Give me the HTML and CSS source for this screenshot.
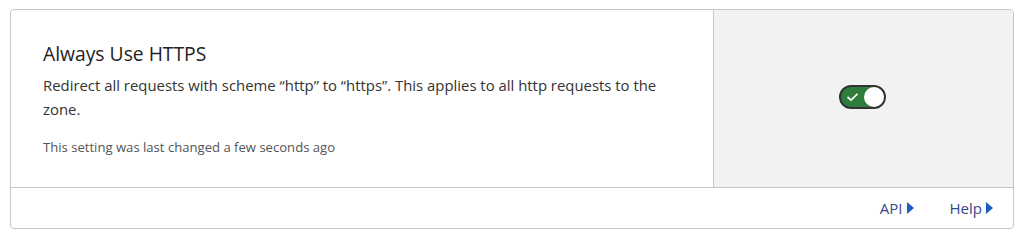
FILE: index.html
```html
<!DOCTYPE html>
<html>
<head>
<meta charset="utf-8">
<link rel="stylesheet" href="styles.css">
</head>
<body>
<div class="card">
  <div class="main">
    <div class="info">
      <h3 class="title">Always Use HTTPS</h3>
      <p class="desc">Redirect all requests with scheme “http” to “https”. This applies to all http requests to the zone.</p>
      <p class="meta">This setting was last changed a few seconds ago</p>
    </div>
    <div class="control">
      <div class="toggle">
        <svg class="check" width="13" height="10" viewBox="0 0 13 10"><path d="M1.5 5 L5 8.2 L11.5 1.8" fill="none" stroke="#fff" stroke-width="1.7"/></svg>
        <span class="knob"></span>
      </div>
    </div>
  </div>
  <div class="footer">
    <a class="link">API<span class="arrow"></span></a>
    <a class="link">Help<span class="arrow"></span></a>
  </div>
</div>
</body>
</html>
```
FILE: styles.css
```css
html, body { margin: 0; padding: 0; background: #fff; }
body { padding: 9px 10px 0 10px; font-family: "Open Sans", "Noto Sans", sans-serif; color: #333; }
.card {
  width: 1002px;
  border: 1px solid #c6c6c6;
  border-radius: 4px;
  overflow: hidden;
}
.main { display: flex; border-bottom: 1px solid #c6c6c6; height: 177px; }
.info { flex: 1; padding: 31px 40px 0 32px; }
.title { margin: 0; font-size: 19.3px; font-weight: 400; color: #222; line-height: 26px; }
.desc { margin: 6px 0 0; font-size: 14.9px; line-height: 24px; color: #333; }
.meta { margin: 17px 0 0; font-size: 13.1px; color: #555; line-height: 18px; }
.control {
  width: 299px;
  background: #f2f2f2;
  border-left: 1px solid #c6c6c6;
  display: flex; align-items: center; justify-content: center;
}
.toggle {
  box-sizing: border-box;
  width: 47px; height: 24px;
  background: #2f7d3d;
  border: 2px solid #333;
  border-radius: 12px;
  display: flex; align-items: center; justify-content: space-between;
  padding: 0 0 0 5px;
  margin-left: -2px;
  margin-top: -3px;
}
.knob { width: 20px; height: 20px; border-radius: 50%; background: #fff; }
.footer { height: 40px; display: flex; justify-content: flex-end; align-items: center; gap: 36px; padding-right: 20px; }
.link { font-size: 15px; color: #36468a; display: flex; align-items: center; }
.arrow { width: 0; height: 0; border-top: 6px solid transparent; border-bottom: 6px solid transparent; border-left: 7px solid #1c5fc4; margin-left: 4px; }
```
